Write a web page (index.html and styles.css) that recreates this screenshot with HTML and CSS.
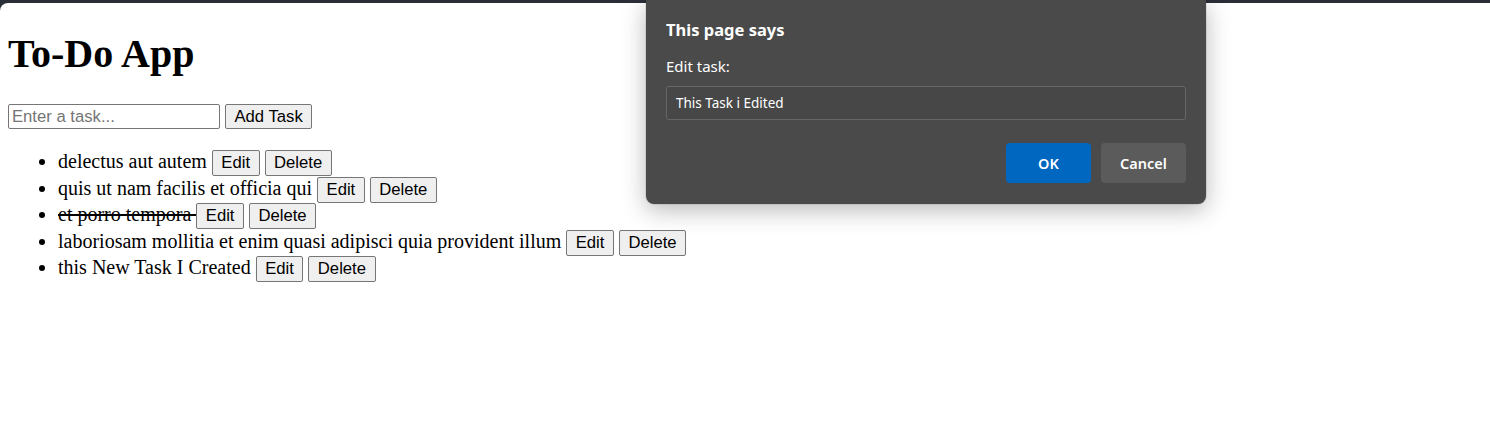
FILE: index.html
```html
<!DOCTYPE html>
<html lang="en">
<head>
<meta charset="utf-8">
<title>To-Do App</title>
<link rel="stylesheet" href="styles.css">
</head>
<body>
<div class="page">
  <h1 class="title">To-Do App</h1>
  <div class="add-row">
    <input class="task-input" type="text" placeholder="Enter a task...">
    <button class="btn">Add Task</button>
  </div>
  <ul class="tasks">
    <li>delectus aut autem <button class="btn">Edit</button> <button class="btn">Delete</button></li>
    <li>quis ut nam facilis et officia qui <button class="btn">Edit</button> <button class="btn">Delete</button></li>
    <li><span class="done">et porro tempora </span><button class="btn">Edit</button> <button class="btn">Delete</button></li>
    <li>laboriosam mollitia et enim quasi adipisci quia provident illum <button class="btn">Edit</button> <button class="btn">Delete</button></li>
    <li>this New Task I Created <button class="btn">Edit</button> <button class="btn">Delete</button></li>
  </ul>
</div>
<div class="dialog">
  <div class="dialog-title">This page says</div>
  <div class="dialog-msg">Edit task:</div>
  <div class="dialog-input">This Task i Edited</div>
  <div class="dialog-actions">
    <button class="dbtn ok">OK</button>
    <button class="dbtn cancel">Cancel</button>
  </div>
</div>
</body>
</html>
```
FILE: styles.css
```css
html, body {
  margin: 0;
  height: 100%;
}
body {
  background: #2a2e37;
  overflow: hidden;
}
.page {
  margin-top: 3px;
  background: #ffffff;
  border-top-left-radius: 8px;
  padding: 1px 8px 0;
  height: calc(100% - 4px);
  font-family: "Liberation Serif", "Times New Roman", serif;
  color: #000;
}
.title {
  font-family: "Liberation Serif", "Times New Roman", serif;
  font-weight: bold;
  font-size: 40px;
  line-height: 44px;
  margin: 28px 0 0;
}
.add-row {
  display: flex;
  gap: 5px;
  margin-top: 28px;
  height: 25px;
}
.task-input {
  box-sizing: border-box;
  width: 212px;
  height: 25px;
  margin: 0;
  border: 1px solid #767676;
  border-radius: 2px;
  padding: 0 3px;
  font-family: "Liberation Sans", Arial, sans-serif;
  font-size: 16.67px;
  color: #000;
  background: #fff;
}
.task-input::placeholder {
  color: #757575;
}
.btn {
  box-sizing: border-box;
  height: 26px;
  margin: 0;
  padding: 0 8.5px;
  border: 1px solid #767676;
  border-radius: 2px;
  background: #efefef;
  color: #000;
  font-family: "Liberation Sans", Arial, sans-serif;
  font-size: 16.67px;
  line-height: 24px;
  vertical-align: middle;
}
.add-row .btn {
  height: 25px;
  line-height: 23px;
}
.tasks {
  margin: 19px 0 0;
  padding-left: 50px;
  font-size: 20px;
}
.tasks li {
  line-height: 26.5px;
  height: 26.5px;
}
.done {
  text-decoration: line-through;
}
.dialog {
  position: absolute;
  left: 646px;
  top: 0;
  width: 560px;
  box-sizing: border-box;
  padding: 20px 20px 21px;
  background: #4a4a4a;
  border-radius: 0 0 8px 8px;
  box-shadow: 0 6px 24px rgba(0, 0, 0, 0.28), 0 0 0 1px rgba(0, 0, 0, 0.08);
  font-family: "Noto Sans", "Open Sans", sans-serif;
  color: #ffffff;
}
.dialog-title {
  font-size: 16.5px;
  font-weight: bold;
  line-height: 20px;
}
.dialog-msg {
  margin-top: 16px;
  font-size: 15px;
  line-height: 20px;
}
.dialog-input {
  box-sizing: border-box;
  margin-top: 10px;
  height: 34px;
  border: 1px solid #666666;
  border-radius: 3px;
  background: #474747;
  padding: 0 9px;
  font-size: 13.5px;
  line-height: 32px;
}
.dialog-actions {
  display: flex;
  justify-content: flex-end;
  gap: 10px;
  margin-top: 23px;
}
.dbtn {
  width: 85px;
  height: 40px;
  border: none;
  border-radius: 4px;
  font-family: "Noto Sans", "Open Sans", sans-serif;
  font-size: 14.5px;
  font-weight: 600;
  color: #ffffff;
  margin: 0;
  padding: 0;
}
.ok {
  background: #0067c0;
}
.cancel {
  background: #5b5b5b;
}
```
